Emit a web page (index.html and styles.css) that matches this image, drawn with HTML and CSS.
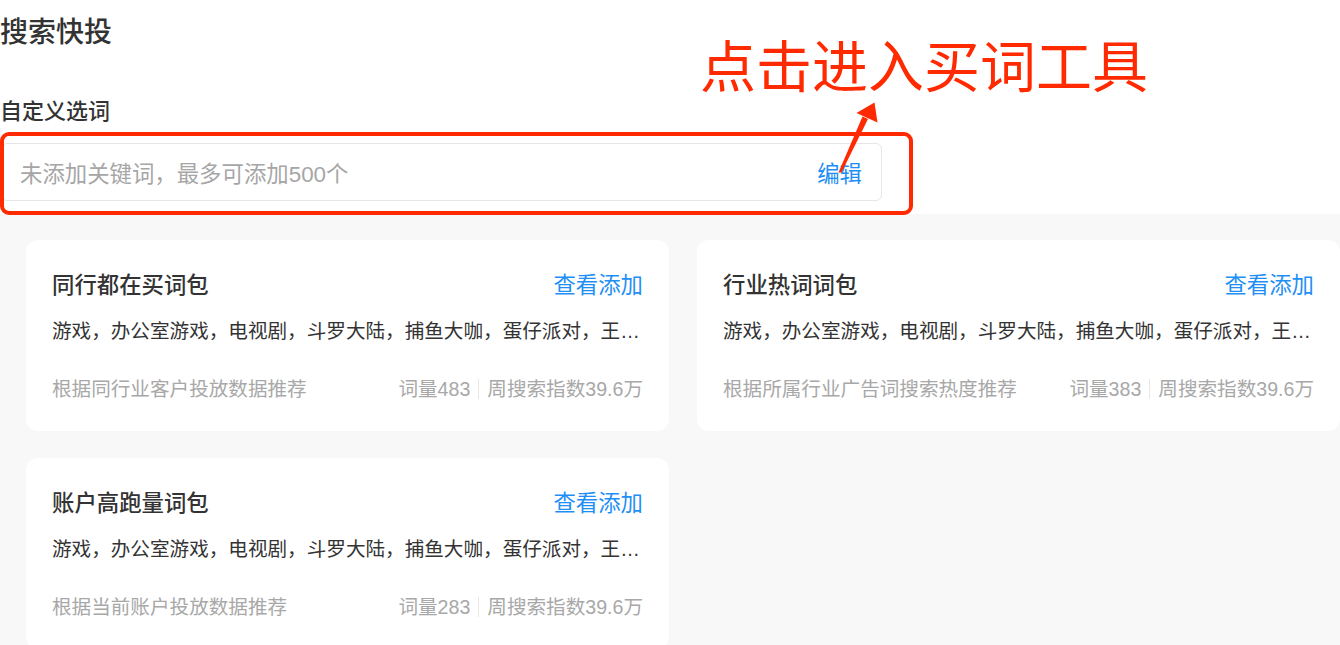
FILE: index.html
```html
<!DOCTYPE html>
<html lang="zh-CN">
<head>
    <meta charset="UTF-8">
    <title>搜索快投</title>
    <link rel="stylesheet" href="styles.css">
</head>
<body>
<div class="page">
    <h1 class="page-title">搜索快投</h1>
    <div class="custom">
        <div class="custom-label">自定义选词</div>
        <div class="word-input">
            <span class="placeholder">未添加关键词，最多可添加500个</span>
            <a class="link">编辑</a>
        </div>
    </div>
    <div class="panel">
        <div class="card">
            <div class="card-head">
                <span class="card-title">同行都在买词包</span>
                <a class="link">查看添加</a>
            </div>
            <div class="card-words">游戏，办公室游戏，电视剧，斗罗大陆，捕鱼大咖，蛋仔派对，王者荣耀，和平精英，原神</div>
            <div class="card-foot">
                <span>根据同行业客户投放数据推荐</span>
                <span class="stat">词量483<i class="sep"></i>周搜索指数39.6万</span>
            </div>
        </div>
        <div class="card">
            <div class="card-head">
                <span class="card-title">行业热词词包</span>
                <a class="link">查看添加</a>
            </div>
            <div class="card-words">游戏，办公室游戏，电视剧，斗罗大陆，捕鱼大咖，蛋仔派对，王者荣耀，和平精英，原神</div>
            <div class="card-foot">
                <span>根据所属行业广告词搜索热度推荐</span>
                <span class="stat">词量383<i class="sep"></i>周搜索指数39.6万</span>
            </div>
        </div>
        <div class="card">
            <div class="card-head">
                <span class="card-title">账户高跑量词包</span>
                <a class="link">查看添加</a>
            </div>
            <div class="card-words">游戏，办公室游戏，电视剧，斗罗大陆，捕鱼大咖，蛋仔派对，王者荣耀，和平精英，原神</div>
            <div class="card-foot">
                <span>根据当前账户投放数据推荐</span>
                <span class="stat">词量283<i class="sep"></i>周搜索指数39.6万</span>
            </div>
        </div>
    </div>

    <!-- 标注 -->
    <div class="mark-box"></div>
    <div class="mark-text">点击进入买词工具</div>
    <svg class="mark-arrow" width="60" height="90" viewBox="825 95 60 90">
        <polygon points="838.5,172.5 841.5,172.5 868,119 862.5,116.5" fill="#ff2a00"/>
        <polygon points="874.5,102.5 856.5,113 877.5,122.5" fill="#ff2a00"/>
    </svg>
</div>
</body>
</html>
```

FILE: styles.css
```css
*{
    margin: 0;
    padding: 0;
    box-sizing: border-box;
}
html,body{
    width: 1340px;
    height: 645px;
    overflow: hidden;
    background: #fff;
}
body{
    font-family: "Liberation Sans", "Noto Sans CJK SC", sans-serif;
    color: #333;
}
.page{
    position: relative;
}
.page-title{
    padding-top: 13px;
    font-size: 28px;
    line-height: 40px;
    font-weight: 500;
    color: #333;
}
.custom{
    margin-top: 43px;
}
.custom-label{
    font-size: 22px;
    line-height: 32px;
    font-weight: 500;
    color: #333;
}
.word-input{
    margin: 15px 0 0 1px;
    width: 881px;
    height: 58px;
    border: 1px solid #e6e6e6;
    border-radius: 6px;
    display: flex;
    align-items: center;
    justify-content: space-between;
    padding: 0 19px 0 18px;
    font-size: 22.4px;
}
.placeholder{
    color: #a6a6a6;
}
.link{
    color: #1f8ff5;
    cursor: pointer;
}
.panel{
    margin-top: 13px;
    background: #f8f8f8;
    padding: 26px 0 0 26px;
    display: grid;
    grid-template-columns: 643px 643px;
    column-gap: 28px;
    row-gap: 27px;
}
.card{
    background: #fff;
    border-radius: 12px;
    padding: 24px 26px 28px 26px;
    height: 191px;
}
.card-head{
    display: flex;
    justify-content: space-between;
    align-items: center;
    height: 38px;
    font-size: 22.4px;
}
.card-title{
    font-weight: 500;
    color: #333;
}
.card-words{
    margin-top: 15px;
    font-size: 19.6px;
    line-height: 28px;
    color: #333;
    white-space: nowrap;
    overflow: hidden;
    text-overflow: ellipsis;
}
.card-foot{
    margin-top: 30px;
    display: flex;
    justify-content: space-between;
    align-items: center;
    font-size: 19.6px;
    line-height: 28px;
    color: #a8a8a8;
}
.stat{
    display: flex;
    align-items: center;
}
.sep{
    display: inline-block;
    width: 1px;
    height: 20px;
    background: #e6e6e6;
    margin: 0 8px;
}
.mark-box{
    position: absolute;
    left: 0;
    top: 132px;
    width: 913px;
    height: 83px;
    border: 4px solid #ff2a00;
    border-radius: 9px;
}
.mark-text{
    position: absolute;
    left: 700px;
    top: 25px;
    font-family: "Noto Sans CJK SC", sans-serif;
    font-size: 56px;
    line-height: 76px;
    color: #ff2a00;
    white-space: nowrap;
}
.mark-arrow{
    position: absolute;
    left: 825px;
    top: 95px;
}
```
